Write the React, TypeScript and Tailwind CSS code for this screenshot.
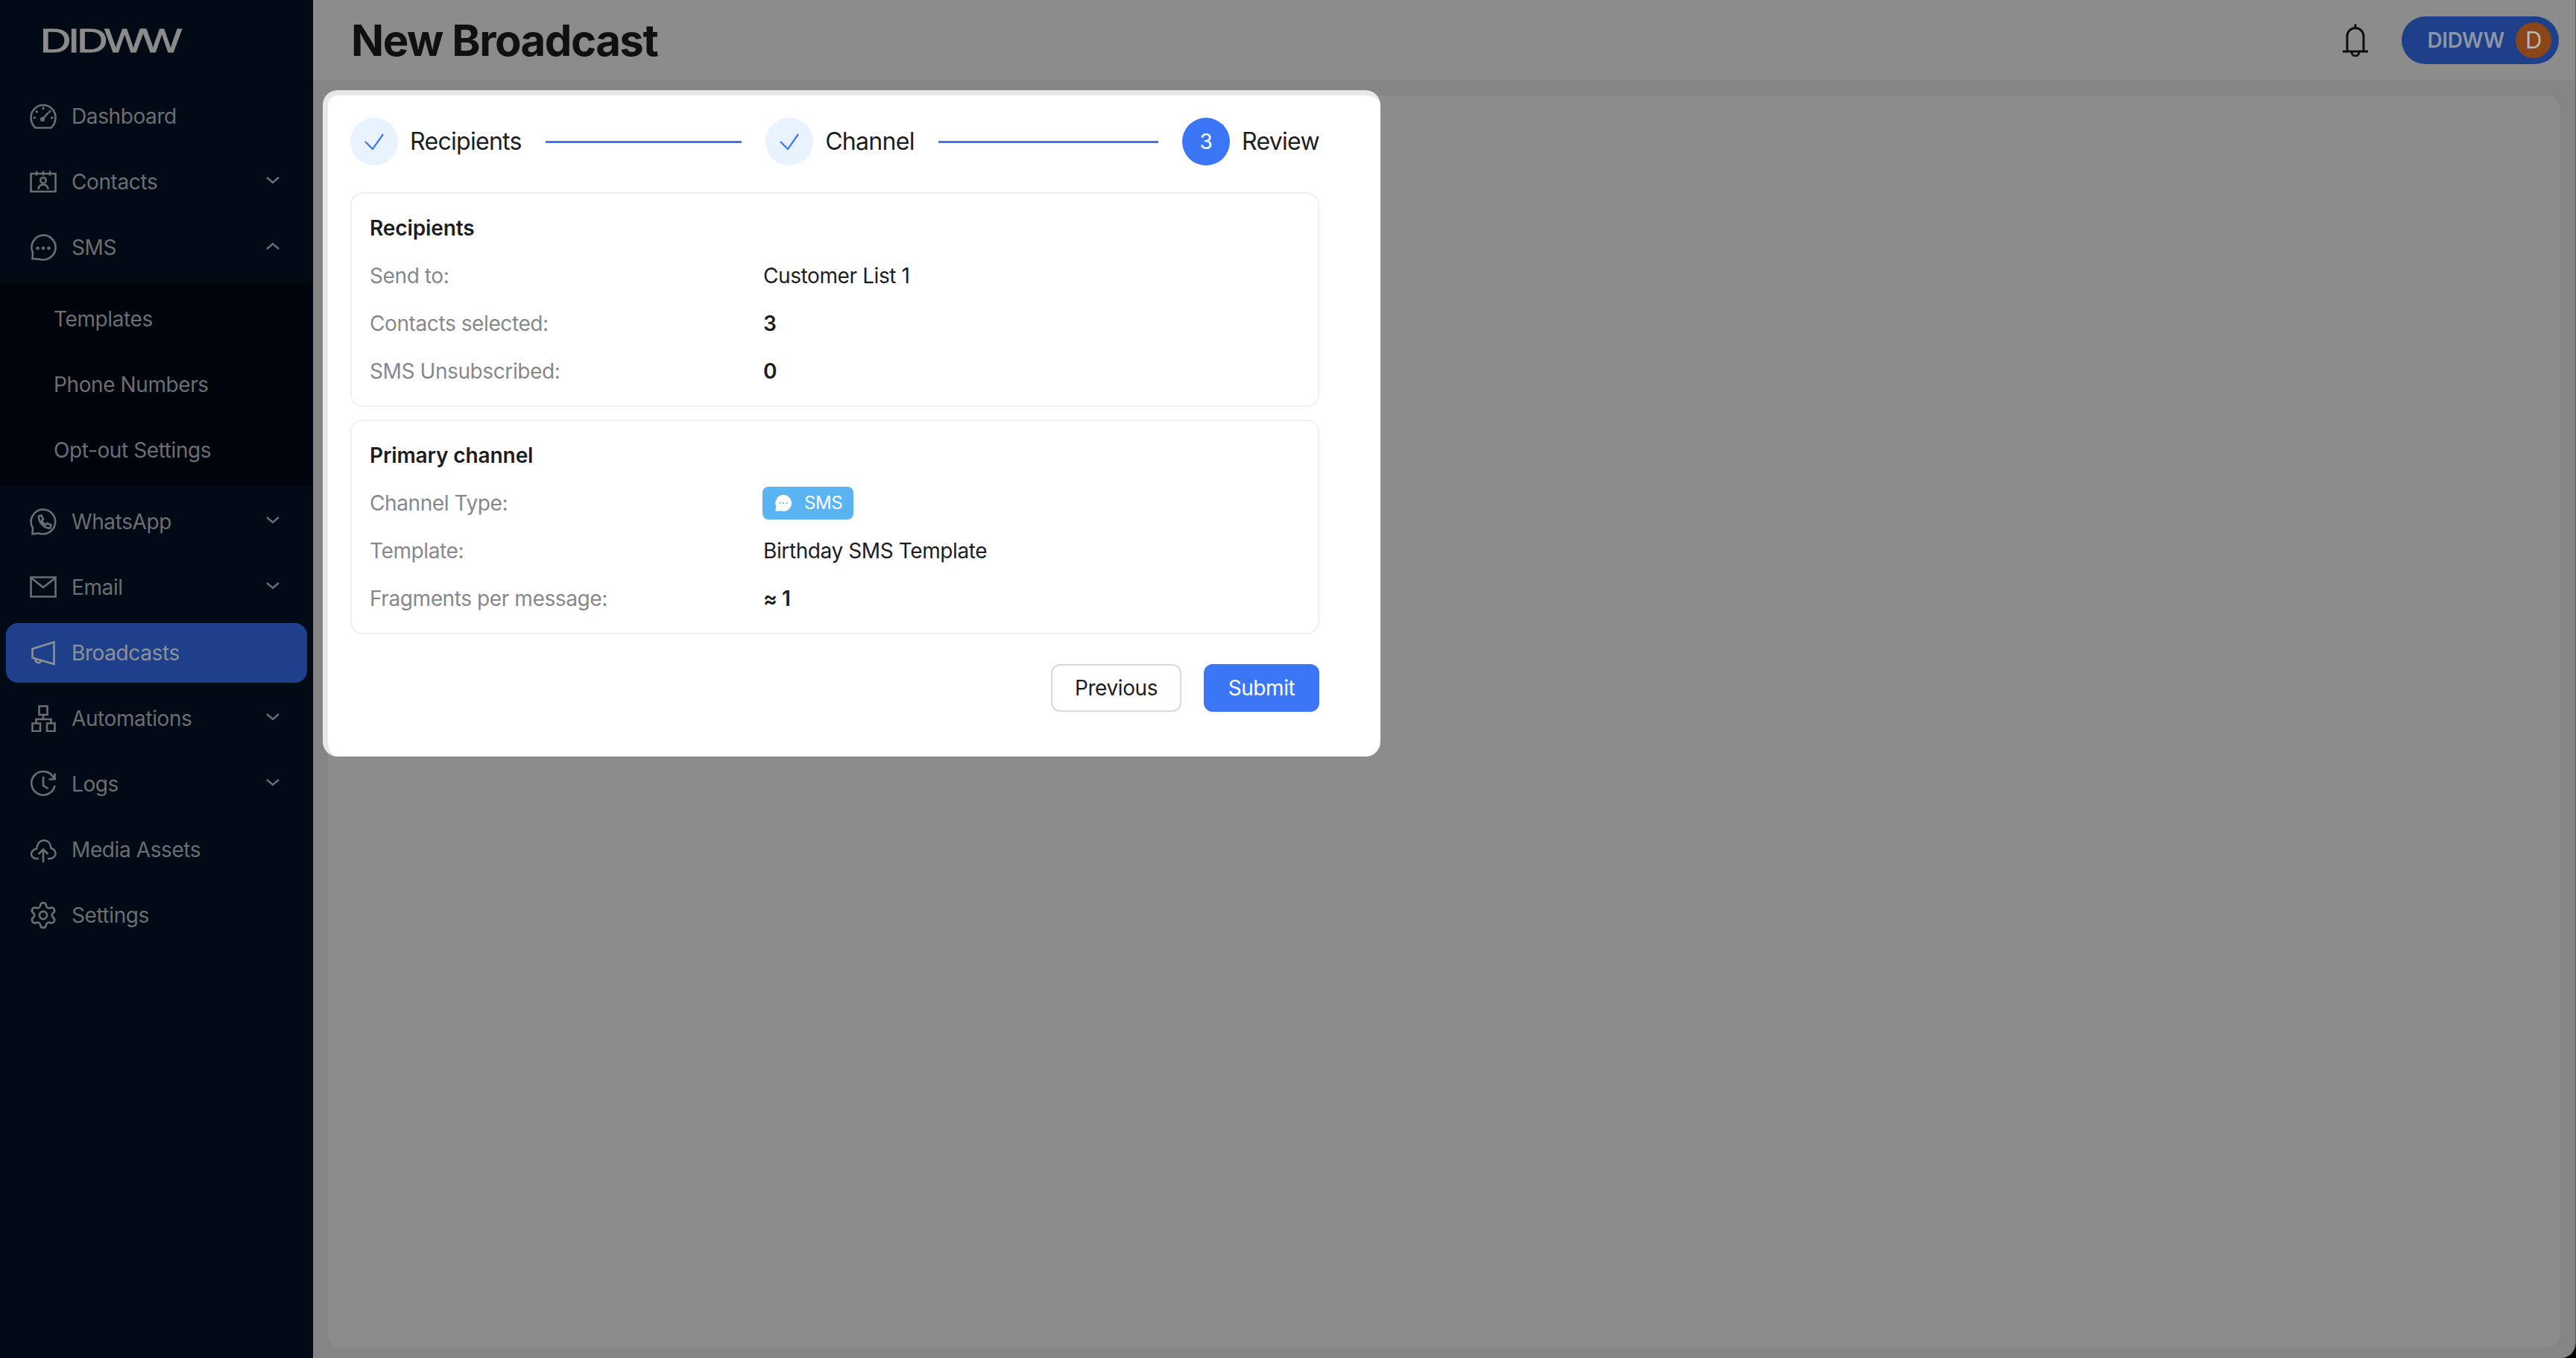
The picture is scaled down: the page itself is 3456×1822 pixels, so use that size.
import type { ReactNode } from 'react'
import { Settings } from 'lucide-react'

const stroke = {
  fill: 'none',
  stroke: 'currentColor',
  strokeWidth: 2.6,
}

function Icon({ children }: { children: ReactNode }) {
  return (
    <svg viewBox="0 0 36 36" className="w-9 h-9 shrink-0" {...stroke}>
      {children}
    </svg>
  )
}

const GaugeIcon = () => (
  <Icon>
    <path d="M7.5 33.5C3.5 30 1.5 25 1.5 19.5a16.5 16.5 0 0 1 33 0c0 5.5-2 10.500-6 14z" />
    <path d="M18 5.500v3.500M8 10.500l2.500 2.500M28 10.500 25.500 13M4.500 20H8M28 20h3.500M17 22l8-9" />
    <circle cx="17" cy="22" r="1.800" />
  </Icon>
)
const ContactsIcon = () => (
  <Icon>
    <path d="M1.500 7h33v24h-33z" />
    <path d="M9 3.500v6M18 3.500v6M27 3.500v6" />
    <circle cx="18" cy="16" r="3.800" />
    <path d="M11.500 28a6.500 6.500 0 0 1 13 0" />
  </Icon>
)
const ChatIcon = () => (
  <Icon>
    <path d="M18 1.500A16.500 16.500 0 1 1 14 34l-10.500-1 .5-8A16.500 16.500 0 0 1 18 1.500z" />
    <circle cx="10.500" cy="19" r="1" />
    <circle cx="18" cy="19" r="1" />
    <circle cx="25.500" cy="19" r="1" />
  </Icon>
)
const WhatsAppIcon = () => (
  <Icon>
    <path d="M18 1.500A16.500 16.500 0 1 1 12 33.500l-8.500 1 .5-8A16.500 16.500 0 0 1 18 1.500z" />
    <path d="M12 10.500l3.500-1 2.500 5-2 2c1 2.500 3 4.500 5.500 5.500l2-2 5 2.500-1 4c-8 1-16-8-15.500-16z" />
  </Icon>
)
const MailIcon = () => (
  <Icon>
    <path d="M1.500 4.500h33v26h-33z" />
    <path d="M2 5.500 18 18 34 5.500" />
  </Icon>
)
const MegaphoneIcon = () => (
  <Icon>
    <path d="M32.500 3.500v29.500L3.500 24.500v-12z" />
    <path d="M7.500 26a4 4 0 0 0 8 2" />
  </Icon>
)
const SitemapIcon = () => (
  <Icon>
    <path d="M12.500 1.500h11v11.500h-11zM3.500 24.500h10.500V35H3.500zM23 24.500h10.500V35H23z" />
    <path d="M18 13v6M8.500 24.500V19h20v5.500" />
  </Icon>
)
const ClockIcon = () => (
  <Icon>
    <path d="M32.500 10.500A15.800 15.800 0 1 0 33.500 20" />
    <path d="M33.500 3.500V11.500H25.500M18 8v12l6.500 4" />
  </Icon>
)
const CloudIcon = () => (
  <Icon>
    <path d="M12 30H8.500C4.500 30 1.500 26 2 23c.7-3.500 4-6 7-6 1-7.500 5-11.500 10-11.500 5.500 0 9 4.500 9.500 10.500 3.500 1 6 4 6 7.500S31 30 27 30h-3" />
    <path d="M18 35V17.500M11.500 24l6.500-6.500 6.500 6.500" />
  </Icon>
)
const GearIcon = () => <Settings size={36} strokeWidth={1.6} className="shrink-0 scale-[1.12]" />

const Chevron = ({ up }: { up?: boolean }) => (
  <svg viewBox="0 0 18 10" className="w-[18px] h-[10px] -mt-1" {...stroke} strokeWidth={2.4}>
    <path d={up ? 'M1 9l8-7 8 7' : 'M1 1l8 7 8-7'} />
  </svg>
)

type NavItem = {
  label: string
  icon: ReactNode
  chevron?: 'up' | 'down'
  active?: boolean
  children?: string[]
}

const nav: NavItem[] = [
  { label: 'Dashboard', icon: <GaugeIcon /> },
  { label: 'Contacts', icon: <ContactsIcon />, chevron: 'down' },
  { label: 'SMS', icon: <ChatIcon />, chevron: 'up', children: ['Templates', 'Phone Numbers', 'Opt-out Settings'] },
  { label: 'WhatsApp', icon: <WhatsAppIcon />, chevron: 'down' },
  { label: 'Email', icon: <MailIcon />, chevron: 'down' },
  { label: 'Broadcasts', icon: <MegaphoneIcon />, active: true },
  { label: 'Automations', icon: <SitemapIcon />, chevron: 'down' },
  { label: 'Logs', icon: <ClockIcon />, chevron: 'down' },
  { label: 'Media Assets', icon: <CloudIcon /> },
  { label: 'Settings', icon: <GearIcon /> },
]

function Sidebar() {
  return (
    <aside className="w-[420px] shrink-0 bg-[#020b15] text-[#6b6e72] flex flex-col">
      <div className="h-28 pl-14 pt-[38px]">
        <svg viewBox="0 0 184 32" className="w-[184px] h-8 block overflow-visible">
          <text
            x="-2"
            y="32"
            textLength="186"
            lengthAdjust="spacingAndGlyphs"
            fill="#8b8b8b"
            stroke="#8b8b8b"
            strokeWidth="1"
            letterSpacing="-3"
            fontFamily="'Liberation Sans', sans-serif"
            fontSize="44"
          >
            DIDWW
          </text>
        </svg>
      </div>
      <nav className="text-[28px]">
        {nav.map((item) => (
          <div key={item.label}>
            <div className="px-2 py-1">
              <div
                className={
                  item.active
                    ? 'h-20 pl-8 pr-[37px] flex items-center gap-5 rounded-[16px] bg-[#1e3f8a] text-[#8e9196]'
                    : 'h-20 pl-8 pr-[37px] flex items-center gap-5 rounded-[16px]'
                }
              >
                {item.icon}
                <span className="flex-1">{item.label}</span>
                {item.chevron && <Chevron up={item.chevron === 'up'} />}
              </div>
            </div>
            {item.children && (
              <div className="mt-1 mb-1 py-1 bg-[#00050d]">
                {item.children.map((child) => (
                  <div key={child} className="h-[88px] pl-[72px] flex items-center">
                    {child}
                  </div>
                ))}
              </div>
            )}
          </div>
        ))}
      </nav>
    </aside>
  )
}

function Step({ label, number }: { label: string; number?: number }) {
  return (
    <div className="flex items-center gap-4 shrink-0">
      {number ? (
        <div className="w-16 h-16 rounded-full bg-[#3b76f6] text-white text-[28px] flex items-center justify-center">
          {number}
        </div>
      ) : (
        <div className="w-16 h-16 rounded-full bg-[#e8f3ff] text-[#3b76f6] flex items-center justify-center">
          <svg viewBox="0 0 26 22" className="w-[26px] h-[22px]" {...stroke} strokeWidth={2.2}>
            <path d="M1 11l10 10L25 1" />
          </svg>
        </div>
      )}
      <span className="text-[32px] tracking-[-0.7px] text-[#1d1d1f]">{label}</span>
    </div>
  )
}

function Row({ label, children }: { label: string; children: ReactNode }) {
  return (
    <div className="h-16 flex items-center">
      <div className="w-[528px] text-[#86888c]">{label}</div>
      <div>{children}</div>
    </div>
  )
}

function ReviewCard({ title, children }: { title: string; children: ReactNode }) {
  return (
    <section className="border-2 border-[#f0f0f0] rounded-[16px] px-6 py-[14px] text-[28px] text-[#1d1d1f]">
      <h3 className="h-16 flex items-center font-semibold tracking-[-0.1px]">{title}</h3>
      {children}
    </section>
  )
}

function Modal() {
  return (
    <div className="absolute left-[433px] top-[121px] w-[1419px] h-[894px] bg-white border-l-[7px] border-t-[7px] border-[#e8e8e8] rounded-[20px] px-[30px] pt-[30px]">
      <div className="flex items-center w-[1300px]">
        <Step label="Recipients" />
        <div className="w-[264px] h-[3px] mx-8 bg-[#3b76f6]" />
        <Step label="Channel" />
        <div className="w-[296px] h-[3px] mx-8 bg-[#3b76f6]" />
        <Step label="Review" number={3} />
      </div>

      <div className="w-[1300px] mt-9 flex flex-col gap-[17px]">
        <ReviewCard title="Recipients">
          <Row label="Send to:">Customer List 1</Row>
          <Row label="Contacts selected:">
            <span className="font-semibold">3</span>
          </Row>
          <Row label="SMS Unsubscribed:">
            <span className="font-semibold">0</span>
          </Row>
        </ReviewCard>
        <ReviewCard title="Primary channel">
          <Row label="Channel Type:">
            <span className="-ml-px w-[122px] h-11 rounded-lg bg-[#5ab4f2] text-white text-2xl flex items-center pl-4 gap-4">
              <svg viewBox="0 0 24 24" className="w-6 h-6 shrink-0">
                <path d="M12 1a11 11 0 1 1-3 21.600L1.500 23l.5-7A11 11 0 0 1 12 1z" fill="#fff" />
                <circle cx="7.500" cy="12" r="1.100" fill="#5ab4f2" />
                <circle cx="12" cy="12" r="1.100" fill="#5ab4f2" />
                <circle cx="16.500" cy="12" r="1.100" fill="#5ab4f2" />
              </svg>
              SMS
            </span>
          </Row>
          <Row label="Template:">Birthday SMS Template</Row>
          <Row label="Fragments per message:">
            <span className="font-semibold">≈ 1</span>
          </Row>
        </ReviewCard>
      </div>

      <div className="w-[1300px] mt-10 flex justify-end gap-[30px] text-[28px]">
        <button className="w-[175px] h-16 rounded-xl border-2 border-[#d9d9d9] text-[#1d1d1f]">Previous</button>
        <button className="w-[155px] h-16 rounded-xl bg-[#3b76f6] text-white">Submit</button>
      </div>
    </div>
  )
}

function Header() {
  return (
    <header className="h-[108px] shrink-0 bg-[#8c8c8c] flex items-center pl-[51px] pr-[22px]">
      <h1 className="flex-1 text-[58px] font-bold text-[#101010] tracking-[-1.45px]">New Broadcast</h1>
      <svg viewBox="0 0 34 44" className="w-[34px] h-11 text-[#0e0e0e] mr-[45px]" {...stroke} strokeWidth={3}>
        <path d="M6 37V16.500a11 11 0 0 1 22 0V37M0 37h34M17 .500v5M12 38a5 5 0 0 0 10 0" />
      </svg>
      <div className="w-[211px] h-16 rounded-full bg-[#1e3f8a] flex items-center justify-end pr-[10px] gap-[15px]">
        <span className="text-[28px] font-semibold text-[#8e94a3]">DIDWW</span>
        <span className="w-12 h-12 rounded-full bg-[#8a4519] text-[#b9b6b3] text-[31px] flex items-center justify-center">
          D
        </span>
      </div>
    </header>
  )
}

export default function App() {
  return (
    <div className="h-screen w-screen bg-black font-[Inter,sans-serif] tracking-[-0.4px]">
      <div className="relative h-full flex overflow-hidden rounded-br-[20px] border-r border-[#5f5f5f]">
        <Sidebar />
        <main className="flex-1 flex flex-col bg-[#858585]">
          <Header />
          <div className="flex-1 ml-5 mr-[21px] mt-5 mb-[14px] rounded-[16px] bg-[#8c8c8c]" />
        </main>
        <Modal />
      </div>
    </div>
  )
}
